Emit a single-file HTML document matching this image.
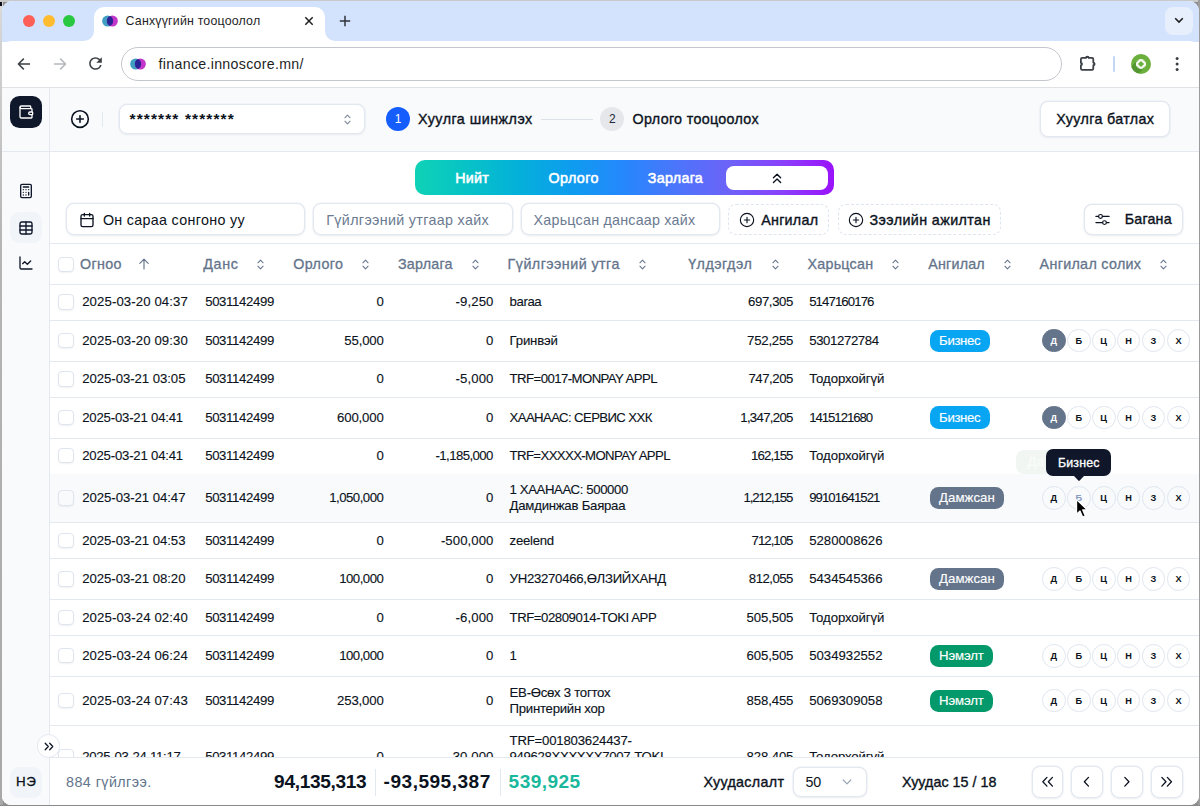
<!DOCTYPE html>
<html lang="mn"><head><meta charset="utf-8"><title>Санхүүгийн тооцоолол</title>
<style>
*{box-sizing:border-box;margin:0;padding:0}
html,body{width:1200px;height:806px;overflow:hidden}
body{position:relative;background:#8e8e8e;font-family:"Liberation Sans",sans-serif;}
.a{position:absolute}
.t{position:absolute;white-space:nowrap;line-height:20px;height:20px}
svg{position:absolute;overflow:visible}
.win{position:absolute;left:2px;top:1px;width:1197px;height:803.5px;border-radius:10px 10px 9px 9px;overflow:hidden;background:#fff}
.bx{position:absolute;background:#fff;border:1px solid #e2e8f0;border-radius:8px;box-shadow:0 0 0 .5px #e9edf3,0 1px 2.5px rgba(15,23,42,.07)}
.dash{position:absolute;background:#fff;border:1px dashed #dfe5ee;border-radius:8px}
.hl{position:absolute;height:1px;background:#e4e9f0}
.cb{position:absolute;width:15.4px;height:15.4px;border:1px solid #dfe5ee;border-radius:4px;background:#fff;box-shadow:0 1px 2px rgba(15,23,42,.06)}
.bd{position:absolute;border-radius:8.5px;height:22.2px}
.ci{position:absolute;width:23.7px;height:23.7px;border-radius:50%;border:1.25px solid #dfe6ef;background:#fff}
.ci.on{background:#64748b;border-color:#64748b}
</style></head><body>
<div class="a" style="left:0;top:0;width:3px;height:806px;background:linear-gradient(#d9d9d9,#b5b5b5 30%,#a8a8a8)"></div>
<div class="a" style="left:0;top:0;width:1.5px;height:6px;background:#0b0d18"></div>
<div class="a" style="left:0;top:0;width:1200px;height:2px;background:#c9c9c9"></div>
<div class="a" style="left:1198px;top:0;width:2px;height:806px;background:#9b9b9b"></div>
<div class="win">
<div class="a" style="left:-2px;top:-1px;width:1200px;height:806px">
<div class="a" style="left:0;top:0;width:1200px;height:42px;background:#d3e3fd"></div>
<div class="a" style="left:22.799999999999997px;top:15.299999999999999px;width:12.2px;height:12.2px;border-radius:50%;background:#fe5f57"></div>
<div class="a" style="left:42.8px;top:15.299999999999999px;width:12.2px;height:12.2px;border-radius:50%;background:#febc2e"></div>
<div class="a" style="left:62.800000000000004px;top:15.299999999999999px;width:12.2px;height:12.2px;border-radius:50%;background:#28c840"></div>
<div class="a" style="left:2px;top:41px;width:1197px;height:46.5px;background:#fff;border-radius:9px 9px 0 0"></div>
<div class="a" style="left:2px;top:87px;width:1197px;height:1px;background:#dfe1e5"></div>
<div class="a" style="left:94px;top:7px;width:231px;height:36px;background:#fff;border-radius:10px 10px 0 0"></div>
<svg style="left:84px;top:31px" width="10" height="10" viewBox="0 0 10 10"><path d="M10 0V10H0A10 10 0 0 0 10 0Z" fill="#fff"/></svg>
<svg style="left:325px;top:31px" width="10" height="10" viewBox="0 0 10 10"><path d="M0 0V10H10A10 10 0 0 1 0 0Z" fill="#fff"/></svg>
<svg style="left:99.9px;top:13.100000000000001px" width="20" height="16" viewBox="-10 -8 20 16"><circle cx="-2.35" cy="0" r="5.5" fill="#3f9ec1"/><circle cx="2.35" cy="0" r="5.5" fill="#c236c9"/><path d="M0 -4.97A5.5 5.5 0 0 1 0 4.97A5.5 5.5 0 0 1 0 -4.97Z" fill="#2a2396"/></svg>
<svg style="left:304px;top:16px" width="10" height="10" viewBox="0 0 10 10"><path d="M1.3 1.3 8.7 8.7M8.7 1.3 1.3 8.7" stroke="#1f1f1f" stroke-width="1.5" fill="none"/></svg>
<svg style="left:339px;top:15px" width="12" height="12" viewBox="0 0 12 12"><path d="M6 .8V11.2M.8 6H11.2" stroke="#30343a" stroke-width="1.5" fill="none"/></svg>
<div class="a" style="left:1165px;top:7px;width:28px;height:28px;border-radius:8px;background:#e7eefc"></div>
<svg style="left:1174px;top:17px" width="10" height="7" viewBox="0 0 10 7"><path d="M1.2 1.3 5 5.1 8.8 1.3" stroke="#1f1f1f" stroke-width="1.6" fill="none"/></svg>
<svg style="left:17px;top:57px" width="14" height="14" viewBox="0 0 14 14"><path d="M13 7H1.6M6.8 1.6 1.4 7 6.8 12.4" stroke="#3c4043" stroke-width="1.5" fill="none" stroke-linejoin="round"/></svg>
<svg style="left:53px;top:57px" width="14" height="14" viewBox="0 0 14 14"><path d="M1 7H12.4M7.2 1.6 12.6 7 7.2 12.4" stroke="#b5b8bd" stroke-width="1.5" fill="none" stroke-linejoin="round"/></svg>
<svg style="left:86.3px;top:54.3px" width="19" height="19" viewBox="0 0 24 24"><path fill="#3c4043" d="M17.65 6.35A7.958 7.958 0 0 0 12 4c-4.42 0-7.99 3.58-7.99 8s3.57 8 7.99 8c3.73 0 6.84-2.55 7.73-6h-2.08A5.99 5.99 0 0 1 12 18c-3.31 0-6-2.69-6-6s2.69-6 6-6c1.66 0 3.14.69 4.22 1.78L13 11h7V4l-2.35 2.35z"/></svg>
<div class="a" style="left:121.4px;top:47.2px;width:940.2px;height:33.8px;border-radius:17px;border:1.2px solid #c3c6cb;background:#fff"></div>
<svg style="left:128.3px;top:55.9px" width="20" height="16" viewBox="-10 -8 20 16"><circle cx="-2.35" cy="0" r="5.5" fill="#3f9ec1"/><circle cx="2.35" cy="0" r="5.5" fill="#c236c9"/><path d="M0 -4.97A5.5 5.5 0 0 1 0 4.97A5.5 5.5 0 0 1 0 -4.97Z" fill="#2a2396"/></svg>
<svg style="left:1079px;top:54px" width="18" height="18" viewBox="0 0 18 18"><path d="M3.2 3.9H7A1.35 1.35 0 0 1 9.7 3.9H13Q14.3 3.9 14.3 5.2V8.6A1.3 1.3 0 0 1 14.3 11.2V14.5Q14.3 15.8 13 15.8H3.2Q1.9 15.8 1.9 14.5V11.2A1.15 1.15 0 0 0 1.9 8.9V5.2Q1.9 3.9 3.2 3.9Z" stroke="#3a3e45" stroke-width="1.75" fill="none" stroke-linejoin="round"/><circle cx="8.35" cy="2.9" r=".9" fill="#3a3e45"/><circle cx="15.3" cy="9.9" r=".9" fill="#3a3e45"/></svg>
<div class="a" style="left:1113.4px;top:56px;width:1.6px;height:16px;background:#c4d6f6;border-radius:1px"></div>
<svg style="left:1131.2px;top:53.8px" width="20" height="20" viewBox="0 0 20 20"><defs><clipPath id="av"><circle cx="10" cy="10" r="10"/></clipPath></defs><circle cx="10" cy="10" r="10" fill="#6bb03c"/><g clip-path="url(#av)"><path d="M6.4 6.4 13.6 13.6 3.6 23.6-3.6 16.4Z" fill="#4e8f2d" opacity=".8"/></g><circle cx="10" cy="10" r="5.1" fill="#fff" opacity=".95"/><path d="M10 6.9 13.1 10 10 13.1 6.9 10Z" fill="#6bb03c"/><path d="M12.2 5.6 14.4 7.8M5.6 12.2 7.8 14.4M7.8 5.6 5.6 7.8M14.4 12.2 12.2 14.4" stroke="#6bb03c" stroke-width=".9"/></svg>
<svg style="left:1174px;top:55px" width="6" height="18" viewBox="0 0 6 18"><circle cx="3.1" cy="3.4" r="1.5" fill="#3c4043"/><circle cx="3.1" cy="9" r="1.5" fill="#3c4043"/><circle cx="3.1" cy="14.6" r="1.5" fill="#3c4043"/></svg>
<div class="a" style="left:2px;top:88px;width:1197px;height:63px;background:#f8fafc"></div>
<div class="a" style="left:2px;top:88px;width:47.5px;height:718px;background:#f8fafc"></div>
<div class="a" style="left:49px;top:88px;width:1px;height:718px;background:#e4e9f0"></div>
<div class="hl" style="left:2px;top:150.5px;width:1197px"></div>
<div class="a" style="left:10px;top:95.8px;width:31.8px;height:31.8px;border-radius:9.5px;background:#0f172a"></div>
<svg style="left:17.7px;top:103.8px" width="16" height="16" viewBox="0 0 24 24" fill="none" stroke="#fff" stroke-width="2" stroke-linecap="round" stroke-linejoin="round"><path d="M19 7V4a1 1 0 0 0-1-1H5a2 2 0 0 0 0 4h15a1 1 0 0 1 1 1v4h-3a2 2 0 0 0 0 4h3a1 1 0 0 0 1-1v-2a1 1 0 0 0-1-1"/><path d="M3 5v14a2 2 0 0 0 2 2h15a1 1 0 0 0 1-1v-4"/></svg>
<svg style="left:18px;top:183.4px" width="16" height="16" viewBox="0 0 24 24" fill="none" stroke="#0f172a" stroke-width="2" stroke-linecap="round" stroke-linejoin="round"><rect x="4" y="2" width="16" height="20" rx="2"/><path d="M8 6h8M16 14v4M16 10h.01M12 10h.01M8 10h.01M12 14h.01M8 14h.01M12 18h.01M8 18h.01"/></svg>
<div class="a" style="left:10px;top:211.6px;width:32px;height:31.6px;border-radius:9px;background:#f1f5f9"></div>
<svg style="left:18px;top:219.5px" width="16" height="16" viewBox="0 0 24 24" fill="none" stroke="#0f172a" stroke-width="2.05" stroke-linecap="round" stroke-linejoin="round"><rect x="3" y="3" width="18" height="18" rx="2.5"/><path d="M12 3v18M3 9h18M3 15h18"/></svg>
<svg style="left:18px;top:255.2px" width="16" height="16" viewBox="0 0 24 24" fill="none" stroke="#0f172a" stroke-width="2" stroke-linecap="round" stroke-linejoin="round"><path d="M3 3v16a2 2 0 0 0 2 2h16"/><path d="m19 9-5 5-4-4-3 3"/></svg>
<svg style="left:69.7px;top:109.1px" width="20" height="20" viewBox="0 0 24 24" fill="none" stroke="#0b1220" stroke-width="1.9" stroke-linecap="round"><circle cx="12" cy="12" r="10"/><path d="M8 12h8M12 8v8"/></svg>
<div class="a" style="left:101.6px;top:111.5px;width:1px;height:15.5px;background:#e2e8f0"></div>
<div class="bx" style="left:119.4px;top:103.5px;width:246px;height:30.9px"></div>
<svg style="left:343.5px;top:113.5px" width="7" height="11" viewBox="0 0 7 11" fill="none" stroke="#7b8698" stroke-width="1.05" stroke-linecap="round" stroke-linejoin="round"><path d="M.9 3.8 3.5 1.1 6.1 3.8M.9 7.2 3.5 9.9 6.1 7.2"/></svg>
<div class="a" style="left:386px;top:107.2px;width:24px;height:24px;border-radius:50%;background:#155dfc"></div>
<div class="a" style="left:541px;top:118.7px;width:51.5px;height:1px;background:#dde2ea"></div>
<div class="a" style="left:600.4px;top:107.2px;width:24px;height:24px;border-radius:50%;background:#e5e7eb"></div>
<div class="bx" style="left:1040px;top:101.4px;width:130.4px;height:35.4px"></div>
<div class="a" style="left:415px;top:159.8px;width:419px;height:35.6px;border-radius:10px;background:linear-gradient(90deg,#0fd2b6 0%,#07c3c6 12%,#04b0da 25%,#0f9bf0 38%,#2687fd 50%,#4a76fb 62%,#6d62f8 75%,#8a3ffa 88%,#9a12fb 100%)"></div>
<div class="a" style="left:726px;top:165.6px;width:102.4px;height:24px;border-radius:8px;background:#fff"></div>
<svg style="left:772px;top:172.5px" width="10.1" height="11" viewBox="0 0 11 12" fill="none" stroke="#0b1220" stroke-width="1.5" stroke-linecap="round" stroke-linejoin="round"><path d="M1.6 5.2 5.5 1.4 9.4 5.2M1.6 10.4 5.5 6.6 9.4 10.4"/></svg>
<div class="bx" style="left:66px;top:203.4px;width:239.3px;height:31.4px"></div>
<svg style="left:79px;top:211.6px" width="16" height="16" viewBox="0 0 24 24" fill="none" stroke="#0b1220" stroke-width="2" stroke-linecap="round" stroke-linejoin="round"><path d="M8 2v4M16 2v4"/><rect x="3" y="4" width="18" height="18" rx="2.5"/><path d="M3 10h18"/></svg>
<div class="bx" style="left:313.4px;top:203.4px;width:199.2px;height:31.4px"></div>
<div class="bx" style="left:520.8px;top:203.4px;width:199px;height:31.4px"></div>
<div class="dash" style="left:728.3px;top:203.6px;width:100.8px;height:31px"></div>
<svg style="left:739px;top:211.6px" width="16" height="16" viewBox="0 0 24 24" fill="none" stroke="#0b1220" stroke-width="1.7" stroke-linecap="round"><circle cx="12" cy="12" r="10"/><path d="M8 12h8M12 8v8"/></svg>
<div class="dash" style="left:838.2px;top:203.6px;width:163.2px;height:31px"></div>
<svg style="left:848.3px;top:211.6px" width="16" height="16" viewBox="0 0 24 24" fill="none" stroke="#0b1220" stroke-width="1.7" stroke-linecap="round"><circle cx="12" cy="12" r="10"/><path d="M8 12h8M12 8v8"/></svg>
<div class="bx" style="left:1084px;top:203.6px;width:98.6px;height:31.2px"></div>
<svg style="left:1095.4px;top:211.8px" width="15" height="15" viewBox="0 0 15 15" fill="none" stroke="#0b1220" stroke-width="1.15" stroke-linecap="round"><path d="M.9 4.4H3.6M7.4 4.4H14.1M.9 10.6H7.6M11.4 10.6H14.1"/><circle cx="5.5" cy="4.4" r="1.9"/><circle cx="9.5" cy="10.6" r="1.9"/></svg>
<div class="hl" style="left:50px;top:243.3px;width:1149px"></div>
<div class="hl" style="left:50px;top:283.6px;width:1149px"></div>
<div class="cb" style="left:58.3px;top:257px"></div>
<svg style="left:257.1px;top:259.2px" width="7" height="11" viewBox="0 0 7 11" fill="none" stroke="#66758c" stroke-width="1.05" stroke-linecap="round" stroke-linejoin="round"><path d="M.9 3.8 3.5 1.1 6.1 3.8M.9 7.2 3.5 9.9 6.1 7.2"/></svg>
<svg style="left:362.1px;top:259.2px" width="7" height="11" viewBox="0 0 7 11" fill="none" stroke="#66758c" stroke-width="1.05" stroke-linecap="round" stroke-linejoin="round"><path d="M.9 3.8 3.5 1.1 6.1 3.8M.9 7.2 3.5 9.9 6.1 7.2"/></svg>
<svg style="left:471.7px;top:259.2px" width="7" height="11" viewBox="0 0 7 11" fill="none" stroke="#66758c" stroke-width="1.05" stroke-linecap="round" stroke-linejoin="round"><path d="M.9 3.8 3.5 1.1 6.1 3.8M.9 7.2 3.5 9.9 6.1 7.2"/></svg>
<svg style="left:638.7px;top:259.2px" width="7" height="11" viewBox="0 0 7 11" fill="none" stroke="#66758c" stroke-width="1.05" stroke-linecap="round" stroke-linejoin="round"><path d="M.9 3.8 3.5 1.1 6.1 3.8M.9 7.2 3.5 9.9 6.1 7.2"/></svg>
<svg style="left:771.5px;top:259.2px" width="7" height="11" viewBox="0 0 7 11" fill="none" stroke="#66758c" stroke-width="1.05" stroke-linecap="round" stroke-linejoin="round"><path d="M.9 3.8 3.5 1.1 6.1 3.8M.9 7.2 3.5 9.9 6.1 7.2"/></svg>
<svg style="left:892.1px;top:259.2px" width="7" height="11" viewBox="0 0 7 11" fill="none" stroke="#66758c" stroke-width="1.05" stroke-linecap="round" stroke-linejoin="round"><path d="M.9 3.8 3.5 1.1 6.1 3.8M.9 7.2 3.5 9.9 6.1 7.2"/></svg>
<svg style="left:1003.9px;top:259.2px" width="7" height="11" viewBox="0 0 7 11" fill="none" stroke="#66758c" stroke-width="1.05" stroke-linecap="round" stroke-linejoin="round"><path d="M.9 3.8 3.5 1.1 6.1 3.8M.9 7.2 3.5 9.9 6.1 7.2"/></svg>
<svg style="left:1160.0px;top:259.2px" width="7" height="11" viewBox="0 0 7 11" fill="none" stroke="#66758c" stroke-width="1.05" stroke-linecap="round" stroke-linejoin="round"><path d="M.9 3.8 3.5 1.1 6.1 3.8M.9 7.2 3.5 9.9 6.1 7.2"/></svg>
<svg style="left:138px;top:258.4px" width="12" height="12" viewBox="0 0 12 12" fill="none" stroke="#66758c" stroke-width="1.15" stroke-linecap="round" stroke-linejoin="round"><path d="M6 11V1.2M1.8 5.4 6 1.2 10.2 5.4"/></svg>
<div class="hl" style="left:50px;top:320.2px;width:1149px"></div>
<div class="cb" style="left:58.3px;top:294.25px"></div>
<div class="hl" style="left:50px;top:360.8px;width:1149px"></div>
<div class="cb" style="left:58.3px;top:332.85px"></div>
<div class="bd" style="left:930px;top:329.65px;width:59.6px;background:#08a5f3"></div>
<div class="ci on" style="left:1041.8500000000001px;top:328.8px"></div>
<div class="ci" style="left:1066.8500000000001px;top:328.8px"></div>
<div class="ci" style="left:1091.8500000000001px;top:328.8px"></div>
<div class="ci" style="left:1116.75px;top:328.8px"></div>
<div class="ci" style="left:1141.65px;top:328.8px"></div>
<div class="ci" style="left:1166.65px;top:328.8px"></div>
<div class="hl" style="left:50px;top:397.0px;width:1149px"></div>
<div class="cb" style="left:58.3px;top:371.25px"></div>
<div class="hl" style="left:50px;top:437.5px;width:1149px"></div>
<div class="cb" style="left:58.3px;top:409.6px"></div>
<div class="bd" style="left:930px;top:406.4px;width:59.6px;background:#08a5f3"></div>
<div class="ci on" style="left:1041.8500000000001px;top:405.55px"></div>
<div class="ci" style="left:1066.8500000000001px;top:405.55px"></div>
<div class="ci" style="left:1091.8500000000001px;top:405.55px"></div>
<div class="ci" style="left:1116.75px;top:405.55px"></div>
<div class="ci" style="left:1141.65px;top:405.55px"></div>
<div class="ci" style="left:1166.65px;top:405.55px"></div>
<div class="hl" style="left:50px;top:473.6px;width:1149px"></div>
<div class="cb" style="left:58.3px;top:447.90000000000003px"></div>
<div class="a" style="left:50px;top:474.1px;width:1149px;height:48.5px;background:#f8fafc"></div>
<div class="hl" style="left:50px;top:522.1px;width:1149px"></div>
<div class="cb" style="left:58.3px;top:490.20000000000005px;background:#f8fafc"></div>
<div class="bd" style="left:930px;top:487.0px;width:73.8px;background:#64748b"></div>
<div class="ci" style="left:1041.8500000000001px;top:486.15000000000003px;background:#f8fafc"></div>
<div class="ci" style="left:1066.8500000000001px;top:486.15000000000003px;background:#f8fafc"></div>
<div class="ci" style="left:1091.8500000000001px;top:486.15000000000003px;background:#f8fafc"></div>
<div class="ci" style="left:1116.75px;top:486.15000000000003px;background:#f8fafc"></div>
<div class="ci" style="left:1141.65px;top:486.15000000000003px;background:#f8fafc"></div>
<div class="ci" style="left:1166.65px;top:486.15000000000003px;background:#f8fafc"></div>
<div class="hl" style="left:50px;top:558.4px;width:1149px"></div>
<div class="cb" style="left:58.3px;top:532.6px"></div>
<div class="hl" style="left:50px;top:599.2px;width:1149px"></div>
<div class="cb" style="left:58.3px;top:571.15px"></div>
<div class="bd" style="left:930px;top:567.9499999999999px;width:73.8px;background:#64748b"></div>
<div class="ci" style="left:1041.8500000000001px;top:567.0999999999999px"></div>
<div class="ci" style="left:1066.8500000000001px;top:567.0999999999999px"></div>
<div class="ci" style="left:1091.8500000000001px;top:567.0999999999999px"></div>
<div class="ci" style="left:1116.75px;top:567.0999999999999px"></div>
<div class="ci" style="left:1141.65px;top:567.0999999999999px"></div>
<div class="ci" style="left:1166.65px;top:567.0999999999999px"></div>
<div class="hl" style="left:50px;top:635.3px;width:1149px"></div>
<div class="cb" style="left:58.3px;top:609.6px"></div>
<div class="hl" style="left:50px;top:675.9px;width:1149px"></div>
<div class="cb" style="left:58.3px;top:647.9499999999999px"></div>
<div class="bd" style="left:930px;top:644.7499999999999px;width:62.5px;background:#04996a"></div>
<div class="ci" style="left:1041.8500000000001px;top:643.8999999999999px"></div>
<div class="ci" style="left:1066.8500000000001px;top:643.8999999999999px"></div>
<div class="ci" style="left:1091.8500000000001px;top:643.8999999999999px"></div>
<div class="ci" style="left:1116.75px;top:643.8999999999999px"></div>
<div class="ci" style="left:1141.65px;top:643.8999999999999px"></div>
<div class="ci" style="left:1166.65px;top:643.8999999999999px"></div>
<div class="hl" style="left:50px;top:724.8px;width:1149px"></div>
<div class="cb" style="left:58.3px;top:692.6999999999999px"></div>
<div class="bd" style="left:930px;top:689.4999999999999px;width:62.5px;background:#04996a"></div>
<div class="ci" style="left:1041.8500000000001px;top:688.6499999999999px"></div>
<div class="ci" style="left:1066.8500000000001px;top:688.6499999999999px"></div>
<div class="ci" style="left:1091.8500000000001px;top:688.6499999999999px"></div>
<div class="ci" style="left:1116.75px;top:688.6499999999999px"></div>
<div class="ci" style="left:1141.65px;top:688.6499999999999px"></div>
<div class="ci" style="left:1166.65px;top:688.6499999999999px"></div>
<div class="hl" style="left:50px;top:789.3px;width:1149px"></div>
<div class="cb" style="left:58.3px;top:749.4px"></div>
<div class="a" style="left:1016px;top:449.5px;width:60px;height:24px;border-radius:8px;background:#f1f6f2"></div>
<span class="t" style="font-size:12.4px;color:#1f1f1f;letter-spacing:0.182px;left:125.60px;top:11.30px;">Санхүүгийн тооцоолол</span>
<span class="t" style="font-size:14.2px;color:#1f1f1f;letter-spacing:0.304px;left:158.60px;top:54.00px;">finance.innoscore.mn/</span>
<span class="t" style="font-size:15.5px;color:#0b1220;font-weight:700;letter-spacing:1.096px;left:129.60px;top:109.20px;">******* *******</span>
<span class="t" style="font-size:12px;color:#fff;left:98.00px;width:600px;text-align:center;top:109.30px;">1</span>
<span class="t" style="font-size:14.3px;color:#0b1220;-webkit-text-stroke:0.35px #0b1220;letter-spacing:0.484px;left:418.00px;top:109.20px;">Хуулга шинжлэх</span>
<span class="t" style="font-size:12px;color:#1e293b;left:312.40px;width:600px;text-align:center;top:109.30px;">2</span>
<span class="t" style="font-size:14.3px;color:#0b1220;-webkit-text-stroke:0.35px #0b1220;letter-spacing:0.318px;left:632.60px;top:109.20px;">Орлого тооцоолох</span>
<span class="t" style="font-size:14.3px;color:#0b1220;-webkit-text-stroke:0.35px #0b1220;letter-spacing:0.343px;left:1056.30px;top:109.10px;">Хуулга батлах</span>
<span class="t" style="font-size:14.3px;color:#fff;-webkit-text-stroke:0.55px #fff;letter-spacing:0.260px;left:172.00px;width:600px;text-align:center;text-indent:0.260px;top:167.70px;">Нийт</span>
<span class="t" style="font-size:14.3px;color:#fff;-webkit-text-stroke:0.55px #fff;letter-spacing:0.435px;left:273.50px;width:600px;text-align:center;text-indent:0.435px;top:167.70px;">Орлого</span>
<span class="t" style="font-size:14.3px;color:#fff;-webkit-text-stroke:0.55px #fff;letter-spacing:0.300px;left:375.30px;width:600px;text-align:center;text-indent:0.300px;top:167.70px;">Зарлага</span>
<span class="t" style="font-size:14.3px;color:#0b1220;letter-spacing:0.313px;left:102.90px;top:209.50px;">Он сараа сонгоно уу</span>
<span class="t" style="font-size:14.3px;color:#6b7a90;letter-spacing:0.333px;left:326.30px;top:209.50px;">Гүйлгээний утгаар хайх</span>
<span class="t" style="font-size:14.3px;color:#6b7a90;letter-spacing:0.218px;left:533.60px;top:209.50px;">Харьцсан дансаар хайх</span>
<span class="t" style="font-size:14.3px;color:#0b1220;-webkit-text-stroke:0.35px #0b1220;letter-spacing:0.260px;left:761.20px;top:209.50px;">Ангилал</span>
<span class="t" style="font-size:14.3px;color:#0b1220;-webkit-text-stroke:0.35px #0b1220;letter-spacing:0.395px;left:869.60px;top:209.50px;">Зээлийн ажилтан</span>
<span class="t" style="font-size:14.3px;color:#0b1220;-webkit-text-stroke:0.35px #0b1220;letter-spacing:0.159px;left:1124.80px;top:209.40px;">Багана</span>
<span class="t" style="font-size:14.3px;color:#64748b;-webkit-text-stroke:0.3px #64748b;letter-spacing:0.312px;left:80.00px;top:254.40px;">Огноо</span>
<span class="t" style="font-size:14.3px;color:#64748b;-webkit-text-stroke:0.3px #64748b;letter-spacing:0.703px;left:203.20px;top:254.40px;">Данс</span>
<span class="t" style="font-size:14.3px;color:#64748b;-webkit-text-stroke:0.3px #64748b;letter-spacing:0.368px;left:293.20px;top:254.40px;">Орлого</span>
<span class="t" style="font-size:14.3px;color:#64748b;-webkit-text-stroke:0.3px #64748b;letter-spacing:0.214px;left:398.00px;top:254.40px;">Зарлага</span>
<span class="t" style="font-size:14.3px;color:#64748b;-webkit-text-stroke:0.3px #64748b;letter-spacing:0.459px;left:507.60px;top:254.40px;">Гүйлгээний утга</span>
<span class="t" style="font-size:14.3px;color:#64748b;-webkit-text-stroke:0.3px #64748b;letter-spacing:0.450px;left:688.20px;top:254.40px;">Үлдэгдэл</span>
<span class="t" style="font-size:14.3px;color:#64748b;-webkit-text-stroke:0.3px #64748b;letter-spacing:0.222px;left:807.60px;top:254.40px;">Харьцсан</span>
<span class="t" style="font-size:14.3px;color:#64748b;-webkit-text-stroke:0.3px #64748b;letter-spacing:0.203px;left:928.20px;top:254.40px;">Ангилал</span>
<span class="t" style="font-size:14.3px;color:#64748b;-webkit-text-stroke:0.3px #64748b;letter-spacing:0.310px;left:1039.60px;top:254.40px;">Ангилал солих</span>
<span class="t" style="font-size:13.2px;color:#0b1220;-webkit-text-stroke:0.12px #0b1220;letter-spacing:0.098px;left:82.20px;top:292.15px;">2025-03-20 04:37</span>
<span class="t" style="font-size:13.2px;color:#0b1220;-webkit-text-stroke:0.12px #0b1220;letter-spacing:-0.367px;left:205.20px;top:292.15px;">5031142499</span>
<span class="t" style="font-size:13.2px;color:#0b1220;-webkit-text-stroke:0.12px #0b1220;right:816.20px;top:292.15px;">0</span>
<span class="t" style="font-size:13.2px;color:#0b1220;-webkit-text-stroke:0.12px #0b1220;letter-spacing:0.083px;right:706.60px;margin-right:-0.083px;top:292.15px;">-9,250</span>
<span class="t" style="font-size:13.2px;color:#0b1220;-webkit-text-stroke:0.12px #0b1220;letter-spacing:-0.407px;left:509.60px;top:292.15px;">baraa</span>
<span class="t" style="font-size:13.2px;color:#0b1220;-webkit-text-stroke:0.12px #0b1220;letter-spacing:-0.371px;right:406.60px;margin-right:0.371px;top:292.15px;">697,305</span>
<span class="t" style="font-size:13.2px;color:#0b1220;-webkit-text-stroke:0.12px #0b1220;letter-spacing:-0.900px;left:809.20px;top:292.15px;">5147160176</span>
<span class="t" style="font-size:13.2px;color:#0b1220;-webkit-text-stroke:0.12px #0b1220;letter-spacing:0.098px;left:82.20px;top:330.75px;">2025-03-20 09:30</span>
<span class="t" style="font-size:13.2px;color:#0b1220;-webkit-text-stroke:0.12px #0b1220;letter-spacing:-0.367px;left:205.20px;top:330.75px;">5031142499</span>
<span class="t" style="font-size:13.2px;color:#0b1220;-webkit-text-stroke:0.12px #0b1220;letter-spacing:-0.167px;right:816.20px;margin-right:0.167px;top:330.75px;">55,000</span>
<span class="t" style="font-size:13.2px;color:#0b1220;-webkit-text-stroke:0.12px #0b1220;right:706.60px;top:330.75px;">0</span>
<span class="t" style="font-size:13.2px;color:#0b1220;-webkit-text-stroke:0.12px #0b1220;letter-spacing:-0.200px;left:509.60px;top:330.75px;">Гринвэй</span>
<span class="t" style="font-size:13.2px;color:#0b1220;-webkit-text-stroke:0.12px #0b1220;letter-spacing:-0.229px;right:406.60px;margin-right:0.229px;top:330.75px;">752,255</span>
<span class="t" style="font-size:13.2px;color:#0b1220;-webkit-text-stroke:0.12px #0b1220;letter-spacing:-0.380px;left:809.20px;top:330.75px;">5301272784</span>
<span class="t" style="font-size:13.2px;color:#fff;-webkit-text-stroke:0.15px #fff;letter-spacing:-0.347px;left:939.10px;top:330.75px;">Бизнес</span>
<span class="t" style="font-size:9.2px;color:#fff;font-weight:700;left:753.70px;width:600px;text-align:center;top:330.85px;">Д</span>
<span class="t" style="font-size:9.2px;color:#0b1220;font-weight:700;left:778.70px;width:600px;text-align:center;top:330.85px;">Б</span>
<span class="t" style="font-size:9.2px;color:#0b1220;font-weight:700;left:803.70px;width:600px;text-align:center;top:330.85px;">Ц</span>
<span class="t" style="font-size:9.2px;color:#0b1220;font-weight:700;left:828.60px;width:600px;text-align:center;top:330.85px;">Н</span>
<span class="t" style="font-size:9.2px;color:#0b1220;font-weight:700;left:853.50px;width:600px;text-align:center;top:330.85px;">З</span>
<span class="t" style="font-size:9.2px;color:#0b1220;font-weight:700;left:878.50px;width:600px;text-align:center;top:330.85px;">Х</span>
<span class="t" style="font-size:13.2px;color:#0b1220;-webkit-text-stroke:0.12px #0b1220;letter-spacing:-0.055px;left:82.20px;top:369.15px;">2025-03-21 03:05</span>
<span class="t" style="font-size:13.2px;color:#0b1220;-webkit-text-stroke:0.12px #0b1220;letter-spacing:-0.367px;left:205.20px;top:369.15px;">5031142499</span>
<span class="t" style="font-size:13.2px;color:#0b1220;-webkit-text-stroke:0.12px #0b1220;right:816.20px;top:369.15px;">0</span>
<span class="t" style="font-size:13.2px;color:#0b1220;-webkit-text-stroke:0.12px #0b1220;letter-spacing:0.083px;right:706.60px;margin-right:-0.083px;top:369.15px;">-5,000</span>
<span class="t" style="font-size:13.2px;color:#0b1220;-webkit-text-stroke:0.12px #0b1220;letter-spacing:-0.569px;left:509.60px;top:369.15px;">TRF=0017-MONPAY APPL</span>
<span class="t" style="font-size:13.2px;color:#0b1220;-webkit-text-stroke:0.12px #0b1220;letter-spacing:-0.457px;right:406.60px;margin-right:0.457px;top:369.15px;">747,205</span>
<span class="t" style="font-size:13.2px;color:#0b1220;-webkit-text-stroke:0.12px #0b1220;letter-spacing:-0.100px;left:809.20px;top:369.15px;">Тодорхойгүй</span>
<span class="t" style="font-size:13.2px;color:#0b1220;-webkit-text-stroke:0.12px #0b1220;letter-spacing:-0.208px;left:82.20px;top:407.50px;">2025-03-21 04:41</span>
<span class="t" style="font-size:13.2px;color:#0b1220;-webkit-text-stroke:0.12px #0b1220;letter-spacing:-0.367px;left:205.20px;top:407.50px;">5031142499</span>
<span class="t" style="font-size:13.2px;color:#0b1220;-webkit-text-stroke:0.12px #0b1220;letter-spacing:-0.143px;right:816.20px;margin-right:0.143px;top:407.50px;">600,000</span>
<span class="t" style="font-size:13.2px;color:#0b1220;-webkit-text-stroke:0.12px #0b1220;right:706.60px;top:407.50px;">0</span>
<span class="t" style="font-size:13.2px;color:#0b1220;-webkit-text-stroke:0.12px #0b1220;letter-spacing:-0.622px;left:509.60px;top:407.50px;">ХААНААС: СЕРВИС ХХК</span>
<span class="t" style="font-size:13.2px;color:#0b1220;-webkit-text-stroke:0.12px #0b1220;letter-spacing:-0.689px;right:406.60px;margin-right:0.689px;top:407.50px;">1,347,205</span>
<span class="t" style="font-size:13.2px;color:#0b1220;-webkit-text-stroke:0.12px #0b1220;letter-spacing:-1.040px;left:809.20px;top:407.50px;">1415121680</span>
<span class="t" style="font-size:13.2px;color:#fff;-webkit-text-stroke:0.15px #fff;letter-spacing:-0.347px;left:939.10px;top:407.50px;">Бизнес</span>
<span class="t" style="font-size:9.2px;color:#fff;font-weight:700;left:753.70px;width:600px;text-align:center;top:407.60px;">Д</span>
<span class="t" style="font-size:9.2px;color:#0b1220;font-weight:700;left:778.70px;width:600px;text-align:center;top:407.60px;">Б</span>
<span class="t" style="font-size:9.2px;color:#0b1220;font-weight:700;left:803.70px;width:600px;text-align:center;top:407.60px;">Ц</span>
<span class="t" style="font-size:9.2px;color:#0b1220;font-weight:700;left:828.60px;width:600px;text-align:center;top:407.60px;">Н</span>
<span class="t" style="font-size:9.2px;color:#0b1220;font-weight:700;left:853.50px;width:600px;text-align:center;top:407.60px;">З</span>
<span class="t" style="font-size:9.2px;color:#0b1220;font-weight:700;left:878.50px;width:600px;text-align:center;top:407.60px;">Х</span>
<span class="t" style="font-size:13.2px;color:#0b1220;-webkit-text-stroke:0.12px #0b1220;letter-spacing:-0.208px;left:82.20px;top:445.80px;">2025-03-21 04:41</span>
<span class="t" style="font-size:13.2px;color:#0b1220;-webkit-text-stroke:0.12px #0b1220;letter-spacing:-0.367px;left:205.20px;top:445.80px;">5031142499</span>
<span class="t" style="font-size:13.2px;color:#0b1220;-webkit-text-stroke:0.12px #0b1220;right:816.20px;top:445.80px;">0</span>
<span class="t" style="font-size:13.2px;color:#0b1220;-webkit-text-stroke:0.12px #0b1220;letter-spacing:-0.570px;right:706.60px;margin-right:0.570px;top:445.80px;">-1,185,000</span>
<span class="t" style="font-size:13.2px;color:#0b1220;-webkit-text-stroke:0.12px #0b1220;letter-spacing:-0.620px;left:509.60px;top:445.80px;">TRF=XXXXX-MONPAY APPL</span>
<span class="t" style="font-size:13.2px;color:#0b1220;-webkit-text-stroke:0.12px #0b1220;letter-spacing:-0.886px;right:406.60px;margin-right:0.886px;top:445.80px;">162,155</span>
<span class="t" style="font-size:13.2px;color:#0b1220;-webkit-text-stroke:0.12px #0b1220;letter-spacing:-0.100px;left:809.20px;top:445.80px;">Тодорхойгүй</span>
<span class="t" style="font-size:13.2px;color:#0b1220;-webkit-text-stroke:0.12px #0b1220;letter-spacing:-0.055px;left:82.20px;top:488.10px;">2025-03-21 04:47</span>
<span class="t" style="font-size:13.2px;color:#0b1220;-webkit-text-stroke:0.12px #0b1220;letter-spacing:-0.367px;left:205.20px;top:488.10px;">5031142499</span>
<span class="t" style="font-size:13.2px;color:#0b1220;-webkit-text-stroke:0.12px #0b1220;letter-spacing:-0.511px;right:816.20px;margin-right:0.511px;top:488.10px;">1,050,000</span>
<span class="t" style="font-size:13.2px;color:#0b1220;-webkit-text-stroke:0.12px #0b1220;right:706.60px;top:488.10px;">0</span>
<span class="t" style="font-size:13.2px;color:#0b1220;-webkit-text-stroke:0.12px #0b1220;letter-spacing:-0.399px;left:509.60px;top:480.10px;">1 ХААНААС: 500000</span>
<span class="t" style="font-size:13.2px;color:#0b1220;-webkit-text-stroke:0.12px #0b1220;letter-spacing:-0.246px;left:509.60px;top:496.10px;">Дамдинжав Баяраа</span>
<span class="t" style="font-size:13.2px;color:#0b1220;-webkit-text-stroke:0.12px #0b1220;letter-spacing:-1.089px;right:406.60px;margin-right:1.089px;top:488.10px;">1,212,155</span>
<span class="t" style="font-size:13.2px;color:#0b1220;-webkit-text-stroke:0.12px #0b1220;letter-spacing:-0.945px;left:809.20px;top:488.10px;">99101641521</span>
<span class="t" style="font-size:13.2px;color:#fff;-webkit-text-stroke:0.15px #fff;letter-spacing:0.046px;left:939.10px;top:488.10px;">Дамжсан</span>
<span class="t" style="font-size:9.2px;color:#0b1220;font-weight:700;left:753.70px;width:600px;text-align:center;top:488.20px;">Д</span>
<span class="t" style="font-size:9.2px;color:#8a9bc0;font-weight:700;left:778.70px;width:600px;text-align:center;top:488.20px;">Б</span>
<span class="t" style="font-size:9.2px;color:#0b1220;font-weight:700;left:803.70px;width:600px;text-align:center;top:488.20px;">Ц</span>
<span class="t" style="font-size:9.2px;color:#0b1220;font-weight:700;left:828.60px;width:600px;text-align:center;top:488.20px;">Н</span>
<span class="t" style="font-size:9.2px;color:#0b1220;font-weight:700;left:853.50px;width:600px;text-align:center;top:488.20px;">З</span>
<span class="t" style="font-size:9.2px;color:#0b1220;font-weight:700;left:878.50px;width:600px;text-align:center;top:488.20px;">Х</span>
<span class="t" style="font-size:13.2px;color:#0b1220;-webkit-text-stroke:0.12px #0b1220;letter-spacing:-0.055px;left:82.20px;top:530.50px;">2025-03-21 04:53</span>
<span class="t" style="font-size:13.2px;color:#0b1220;-webkit-text-stroke:0.12px #0b1220;letter-spacing:-0.367px;left:205.20px;top:530.50px;">5031142499</span>
<span class="t" style="font-size:13.2px;color:#0b1220;-webkit-text-stroke:0.12px #0b1220;right:816.20px;top:530.50px;">0</span>
<span class="t" style="font-size:13.2px;color:#0b1220;-webkit-text-stroke:0.12px #0b1220;letter-spacing:0.062px;right:706.60px;margin-right:-0.062px;top:530.50px;">-500,000</span>
<span class="t" style="font-size:13.2px;color:#0b1220;-webkit-text-stroke:0.12px #0b1220;letter-spacing:-0.272px;left:509.60px;top:530.50px;">zeelend</span>
<span class="t" style="font-size:13.2px;color:#0b1220;-webkit-text-stroke:0.12px #0b1220;letter-spacing:-0.971px;right:406.60px;margin-right:0.971px;top:530.50px;">712,105</span>
<span class="t" style="font-size:13.2px;color:#0b1220;-webkit-text-stroke:0.12px #0b1220;left:809.20px;top:530.50px;">5280008626</span>
<span class="t" style="font-size:13.2px;color:#0b1220;-webkit-text-stroke:0.12px #0b1220;letter-spacing:-0.055px;left:82.20px;top:569.05px;">2025-03-21 08:20</span>
<span class="t" style="font-size:13.2px;color:#0b1220;-webkit-text-stroke:0.12px #0b1220;letter-spacing:-0.367px;left:205.20px;top:569.05px;">5031142499</span>
<span class="t" style="font-size:13.2px;color:#0b1220;-webkit-text-stroke:0.12px #0b1220;letter-spacing:-0.514px;right:816.20px;margin-right:0.514px;top:569.05px;">100,000</span>
<span class="t" style="font-size:13.2px;color:#0b1220;-webkit-text-stroke:0.12px #0b1220;right:706.60px;top:569.05px;">0</span>
<span class="t" style="font-size:13.2px;color:#0b1220;-webkit-text-stroke:0.12px #0b1220;letter-spacing:-0.291px;left:509.60px;top:569.05px;">УН23270466,ӨЛЗИЙХАНД</span>
<span class="t" style="font-size:13.2px;color:#0b1220;-webkit-text-stroke:0.12px #0b1220;letter-spacing:-0.514px;right:406.60px;margin-right:0.514px;top:569.05px;">812,055</span>
<span class="t" style="font-size:13.2px;color:#0b1220;-webkit-text-stroke:0.12px #0b1220;left:809.20px;top:569.05px;">5434545366</span>
<span class="t" style="font-size:13.2px;color:#fff;-webkit-text-stroke:0.15px #fff;letter-spacing:0.046px;left:939.10px;top:569.05px;">Дамжсан</span>
<span class="t" style="font-size:9.2px;color:#0b1220;font-weight:700;left:753.70px;width:600px;text-align:center;top:569.15px;">Д</span>
<span class="t" style="font-size:9.2px;color:#0b1220;font-weight:700;left:778.70px;width:600px;text-align:center;top:569.15px;">Б</span>
<span class="t" style="font-size:9.2px;color:#0b1220;font-weight:700;left:803.70px;width:600px;text-align:center;top:569.15px;">Ц</span>
<span class="t" style="font-size:9.2px;color:#0b1220;font-weight:700;left:828.60px;width:600px;text-align:center;top:569.15px;">Н</span>
<span class="t" style="font-size:9.2px;color:#0b1220;font-weight:700;left:853.50px;width:600px;text-align:center;top:569.15px;">З</span>
<span class="t" style="font-size:9.2px;color:#0b1220;font-weight:700;left:878.50px;width:600px;text-align:center;top:569.15px;">Х</span>
<span class="t" style="font-size:13.2px;color:#0b1220;-webkit-text-stroke:0.12px #0b1220;letter-spacing:0.098px;left:82.20px;top:607.50px;">2025-03-24 02:40</span>
<span class="t" style="font-size:13.2px;color:#0b1220;-webkit-text-stroke:0.12px #0b1220;letter-spacing:-0.367px;left:205.20px;top:607.50px;">5031142499</span>
<span class="t" style="font-size:13.2px;color:#0b1220;-webkit-text-stroke:0.12px #0b1220;right:816.20px;top:607.50px;">0</span>
<span class="t" style="font-size:13.2px;color:#0b1220;-webkit-text-stroke:0.12px #0b1220;letter-spacing:0.083px;right:706.60px;margin-right:-0.083px;top:607.50px;">-6,000</span>
<span class="t" style="font-size:13.2px;color:#0b1220;-webkit-text-stroke:0.12px #0b1220;letter-spacing:-0.456px;left:509.60px;top:607.50px;">TRF=02809014-TOKI APP</span>
<span class="t" style="font-size:13.2px;color:#0b1220;-webkit-text-stroke:0.12px #0b1220;letter-spacing:-0.143px;right:406.60px;margin-right:0.143px;top:607.50px;">505,505</span>
<span class="t" style="font-size:13.2px;color:#0b1220;-webkit-text-stroke:0.12px #0b1220;letter-spacing:-0.100px;left:809.20px;top:607.50px;">Тодорхойгүй</span>
<span class="t" style="font-size:13.2px;color:#0b1220;-webkit-text-stroke:0.12px #0b1220;letter-spacing:0.098px;left:82.20px;top:645.85px;">2025-03-24 06:24</span>
<span class="t" style="font-size:13.2px;color:#0b1220;-webkit-text-stroke:0.12px #0b1220;letter-spacing:-0.367px;left:205.20px;top:645.85px;">5031142499</span>
<span class="t" style="font-size:13.2px;color:#0b1220;-webkit-text-stroke:0.12px #0b1220;letter-spacing:-0.514px;right:816.20px;margin-right:0.514px;top:645.85px;">100,000</span>
<span class="t" style="font-size:13.2px;color:#0b1220;-webkit-text-stroke:0.12px #0b1220;right:706.60px;top:645.85px;">0</span>
<span class="t" style="font-size:13.2px;color:#0b1220;-webkit-text-stroke:0.12px #0b1220;letter-spacing:-2.344px;left:509.60px;top:645.85px;">1</span>
<span class="t" style="font-size:13.2px;color:#0b1220;-webkit-text-stroke:0.12px #0b1220;letter-spacing:-0.143px;right:406.60px;margin-right:0.143px;top:645.85px;">605,505</span>
<span class="t" style="font-size:13.2px;color:#0b1220;-webkit-text-stroke:0.12px #0b1220;left:809.20px;top:645.85px;">5034932552</span>
<span class="t" style="font-size:13.2px;color:#fff;-webkit-text-stroke:0.15px #fff;letter-spacing:-0.167px;left:939.10px;top:645.85px;">Нэмэлт</span>
<span class="t" style="font-size:9.2px;color:#0b1220;font-weight:700;left:753.70px;width:600px;text-align:center;top:645.95px;">Д</span>
<span class="t" style="font-size:9.2px;color:#0b1220;font-weight:700;left:778.70px;width:600px;text-align:center;top:645.95px;">Б</span>
<span class="t" style="font-size:9.2px;color:#0b1220;font-weight:700;left:803.70px;width:600px;text-align:center;top:645.95px;">Ц</span>
<span class="t" style="font-size:9.2px;color:#0b1220;font-weight:700;left:828.60px;width:600px;text-align:center;top:645.95px;">Н</span>
<span class="t" style="font-size:9.2px;color:#0b1220;font-weight:700;left:853.50px;width:600px;text-align:center;top:645.95px;">З</span>
<span class="t" style="font-size:9.2px;color:#0b1220;font-weight:700;left:878.50px;width:600px;text-align:center;top:645.95px;">Х</span>
<span class="t" style="font-size:13.2px;color:#0b1220;-webkit-text-stroke:0.12px #0b1220;letter-spacing:0.098px;left:82.20px;top:690.60px;">2025-03-24 07:43</span>
<span class="t" style="font-size:13.2px;color:#0b1220;-webkit-text-stroke:0.12px #0b1220;letter-spacing:-0.367px;left:205.20px;top:690.60px;">5031142499</span>
<span class="t" style="font-size:13.2px;color:#0b1220;-webkit-text-stroke:0.12px #0b1220;letter-spacing:-0.143px;right:816.20px;margin-right:0.143px;top:690.60px;">253,000</span>
<span class="t" style="font-size:13.2px;color:#0b1220;-webkit-text-stroke:0.12px #0b1220;right:706.60px;top:690.60px;">0</span>
<span class="t" style="font-size:13.2px;color:#0b1220;-webkit-text-stroke:0.12px #0b1220;letter-spacing:-0.278px;left:509.60px;top:682.60px;">ЕВ-Өсөх 3 тогтох</span>
<span class="t" style="font-size:13.2px;color:#0b1220;-webkit-text-stroke:0.12px #0b1220;letter-spacing:-0.266px;left:509.60px;top:698.60px;">Принтерийн хор</span>
<span class="t" style="font-size:13.2px;color:#0b1220;-webkit-text-stroke:0.12px #0b1220;letter-spacing:-0.143px;right:406.60px;margin-right:0.143px;top:690.60px;">858,455</span>
<span class="t" style="font-size:13.2px;color:#0b1220;-webkit-text-stroke:0.12px #0b1220;left:809.20px;top:690.60px;">5069309058</span>
<span class="t" style="font-size:13.2px;color:#fff;-webkit-text-stroke:0.15px #fff;letter-spacing:-0.167px;left:939.10px;top:690.60px;">Нэмэлт</span>
<span class="t" style="font-size:9.2px;color:#0b1220;font-weight:700;left:753.70px;width:600px;text-align:center;top:690.70px;">Д</span>
<span class="t" style="font-size:9.2px;color:#0b1220;font-weight:700;left:778.70px;width:600px;text-align:center;top:690.70px;">Б</span>
<span class="t" style="font-size:9.2px;color:#0b1220;font-weight:700;left:803.70px;width:600px;text-align:center;top:690.70px;">Ц</span>
<span class="t" style="font-size:9.2px;color:#0b1220;font-weight:700;left:828.60px;width:600px;text-align:center;top:690.70px;">Н</span>
<span class="t" style="font-size:9.2px;color:#0b1220;font-weight:700;left:853.50px;width:600px;text-align:center;top:690.70px;">З</span>
<span class="t" style="font-size:9.2px;color:#0b1220;font-weight:700;left:878.50px;width:600px;text-align:center;top:690.70px;">Х</span>
<span class="t" style="font-size:13.2px;color:#0b1220;-webkit-text-stroke:0.12px #0b1220;letter-spacing:-0.300px;left:82.20px;top:747.30px;">2025-03-24 11:17</span>
<span class="t" style="font-size:13.2px;color:#0b1220;-webkit-text-stroke:0.12px #0b1220;letter-spacing:-0.367px;left:205.20px;top:747.30px;">5031142499</span>
<span class="t" style="font-size:13.2px;color:#0b1220;-webkit-text-stroke:0.12px #0b1220;right:816.20px;top:747.30px;">0</span>
<span class="t" style="font-size:13.2px;color:#0b1220;-webkit-text-stroke:0.12px #0b1220;letter-spacing:0.071px;right:706.60px;margin-right:-0.071px;top:747.30px;">-30,000</span>
<span class="t" style="font-size:13.2px;color:#0b1220;-webkit-text-stroke:0.12px #0b1220;letter-spacing:-0.215px;left:509.60px;top:731.30px;">TRF=001803624437-</span>
<span class="t" style="font-size:13.2px;color:#0b1220;-webkit-text-stroke:0.12px #0b1220;letter-spacing:-0.350px;left:509.60px;top:747.30px;">949628XXXXXX7007-TOKI</span>
<span class="t" style="font-size:13.2px;color:#0b1220;-webkit-text-stroke:0.12px #0b1220;letter-spacing:0.436px;left:509.60px;top:763.30px;">APP</span>
<span class="t" style="font-size:13.2px;color:#0b1220;-webkit-text-stroke:0.12px #0b1220;letter-spacing:-0.143px;right:406.60px;margin-right:0.143px;top:747.30px;">828,405</span>
<span class="t" style="font-size:13.2px;color:#0b1220;-webkit-text-stroke:0.12px #0b1220;letter-spacing:-0.100px;left:809.20px;top:747.30px;">Тодорхойгүй</span>
<span class="t" style="font-size:13.2px;color:#fafcfa;-webkit-text-stroke:0.3px #fafcfa;left:1027.60px;top:451.60px;">Да</span>
<span class="t" style="font-size:13.4px;color:#0b1220;-webkit-text-stroke:0.3px #0b1220;letter-spacing:0.702px;left:-274.00px;width:600px;text-align:center;text-indent:0.702px;top:772.20px;z-index:6;">НЭ</span>
<span class="t" style="font-size:14.3px;color:#64748b;letter-spacing:0.450px;left:66.00px;top:772.00px;z-index:6;">884 гүйлгээ.</span>
<span class="t" style="font-size:19.1px;color:#0b1220;font-weight:700;letter-spacing:-0.336px;left:274.10px;top:772.30px;z-index:6;">94,135,313</span>
<span class="t" style="font-size:19.1px;color:#0b1220;font-weight:700;letter-spacing:0.480px;left:383.60px;top:772.30px;z-index:6;">-93,595,387</span>
<span class="t" style="font-size:19.1px;color:#19b89c;font-weight:700;letter-spacing:0.438px;left:508.60px;top:772.30px;z-index:6;">539,925</span>
<span class="t" style="font-size:14.3px;color:#0b1220;-webkit-text-stroke:0.35px #0b1220;letter-spacing:0.323px;left:703.40px;top:772.00px;z-index:6;">Хуудаслалт</span>
<span class="t" style="font-size:14.3px;color:#0b1220;letter-spacing:-0.103px;left:805.40px;top:772.00px;z-index:6;">50</span>
<span class="t" style="font-size:14.3px;color:#0b1220;-webkit-text-stroke:0.35px #0b1220;letter-spacing:0.037px;left:901.90px;top:772.00px;z-index:6;">Хуудас 15 / 18</span>
<span class="t" style="font-size:12.4px;color:#fff;-webkit-text-stroke:0.3px #fff;letter-spacing:0.171px;left:778.70px;width:600px;text-align:center;text-indent:0.171px;top:452.50px;z-index:8;">Бизнес</span>
<div class="a" style="left:50px;top:757px;width:1149px;height:49px;background:#fff;border-top:1px solid #e4e9f0"></div>
<div class="a" style="left:2px;top:757px;width:47px;height:49px;background:#f8fafc"></div>
<div class="a" style="left:37px;top:734.4px;width:23.2px;height:23.2px;border-radius:50%;background:#fff;border:1px solid #e2e8f0"></div>
<svg style="left:43.6px;top:741.5px" width="10" height="9" viewBox="0 0 10 9" fill="none" stroke="#0b1220" stroke-width="1.25" stroke-linecap="round" stroke-linejoin="round"><path d="M1.2 1.2 4.3 4.5 1.2 7.8M5.7 1.2 8.8 4.5 5.7 7.8"/></svg>
<div class="a" style="left:10.3px;top:766.8px;width:31.3px;height:31px;border-radius:9px;background:#f1f5f9"></div>
<div class="a" style="left:375.1px;top:768.5px;width:1px;height:27px;background:#e2e8f0"></div>
<div class="a" style="left:499.9px;top:768.5px;width:1px;height:27px;background:#e2e8f0"></div>
<div class="bx" style="left:792.8px;top:766.8px;width:74.4px;height:30.6px"></div>
<svg style="left:842px;top:779.3px" width="10" height="6" viewBox="0 0 10 6" fill="none" stroke="#9aa5b5" stroke-width="1.2" stroke-linecap="round" stroke-linejoin="round"><path d="M1.2 1 5 4.8 8.8 1"/></svg>
<div class="bx" style="left:1031.7px;top:766.4px;width:31.2px;height:31.2px"></div>
<svg style="left:1040.65px;top:776.3px" width="13.3" height="11.5" viewBox="0 0 11.6 10" fill="none" stroke="#0b1220" stroke-width="1.15" stroke-linecap="round" stroke-linejoin="round"><path d="M5.2 1.2 1.6 5 5.2 8.8M10 1.2 6.4 5 10 8.8"/></svg>
<div class="bx" style="left:1071.4px;top:766.4px;width:31.2px;height:31.2px"></div>
<svg style="left:1080.3500000000001px;top:776.3px" width="13.3" height="11.5" viewBox="0 0 11.6 10" fill="none" stroke="#0b1220" stroke-width="1.15" stroke-linecap="round" stroke-linejoin="round"><path d="M7.4 1.2 3.8 5 7.4 8.8"/></svg>
<div class="bx" style="left:1111.4px;top:766.4px;width:31.2px;height:31.2px"></div>
<svg style="left:1120.3500000000001px;top:776.3px" width="13.3" height="11.5" viewBox="0 0 11.6 10" fill="none" stroke="#0b1220" stroke-width="1.15" stroke-linecap="round" stroke-linejoin="round"><path d="M4.2 1.2 7.8 5 4.2 8.8"/></svg>
<div class="bx" style="left:1151.4px;top:766.4px;width:31.2px;height:31.2px"></div>
<svg style="left:1160.3500000000001px;top:776.3px" width="13.3" height="11.5" viewBox="0 0 11.6 10" fill="none" stroke="#0b1220" stroke-width="1.15" stroke-linecap="round" stroke-linejoin="round"><path d="M1.6 1.2 5.2 5 1.6 8.8M6.4 1.2 10 5 6.4 8.8"/></svg>
<div class="a" style="left:1045.8px;top:448.8px;width:65.2px;height:27.6px;border-radius:7px;background:#10172b;z-index:7"></div>
<svg style="left:1073.7px;top:475.6px;z-index:7" width="10" height="6" viewBox="0 0 10 6"><path d="M0 0H10L5.7 4.6Q5 5.3 4.3 4.6Z" fill="#10172b"/></svg>
<svg style="left:1075.4px;top:497.6px;z-index:9" width="14" height="21" viewBox="0 0 14 21"><path d="M1.6 1.7V16.1L5 12.9 7.7 19 10.3 17.9 7.7 11.9H12.3Z" fill="#000" stroke="#fff" stroke-width="1.15" stroke-linejoin="round"/></svg>
</div></div>
<div class="a" style="left:0;top:804.5px;width:1200px;height:1.5px;background:#8a8a8a"></div>
</body></html>
